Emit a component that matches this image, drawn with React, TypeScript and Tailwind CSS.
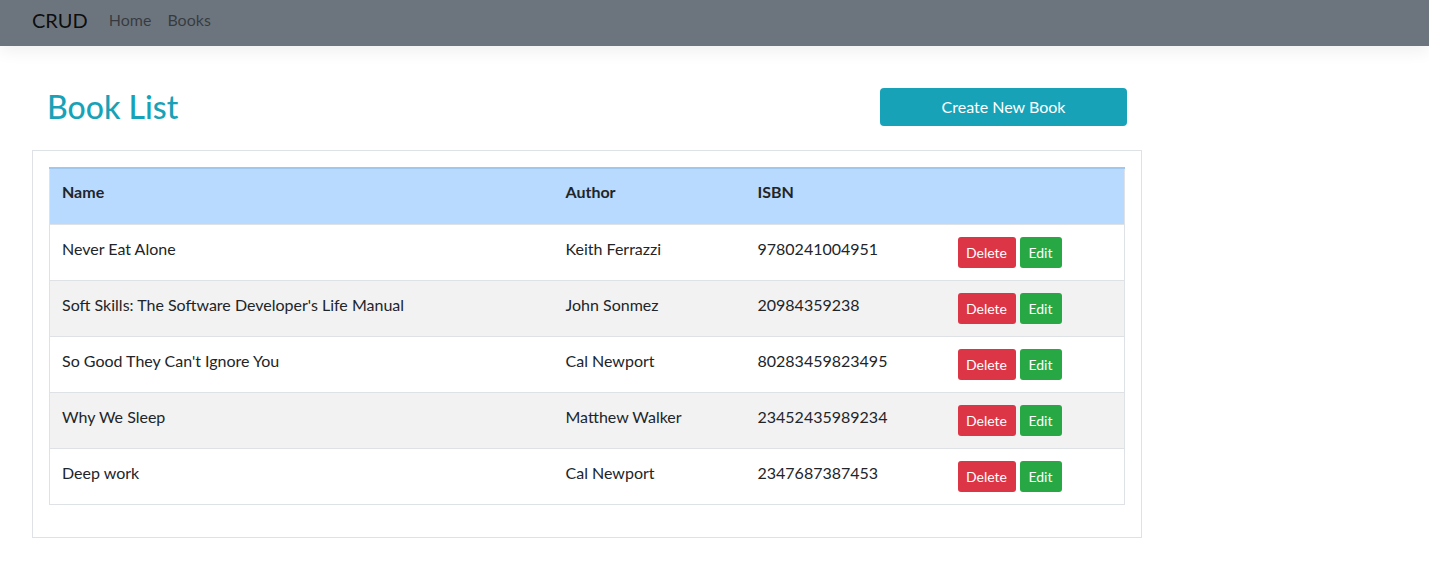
const books = [
  { name: "Never Eat Alone", author: "Keith Ferrazzi", isbn: "9780241004951" },
  { name: "Soft Skills: The Software Developer's Life Manual", author: "John Sonmez", isbn: "20984359238" },
  { name: "So Good They Can't Ignore You", author: "Cal Newport", isbn: "80283459823495" },
  { name: "Why We Sleep", author: "Matthew Walker", isbn: "23452435989234" },
  { name: "Deep work", author: "Cal Newport", isbn: "2347687387453" },
];

const App = () => {
  return (
    <div className="min-h-[580px] bg-white text-[#212529]" style={{ fontFamily: "Lato, 'Noto Sans', sans-serif" }}>
      <nav className="flex h-[46px] items-center bg-[#6c757d] pb-[6px] pl-[32px] shadow-[0_6px_16px_rgba(0,0,0,0.06)]">
        <span className="mr-[21px] text-[20px] leading-[30px] text-black/90">CRUD</span>
        <a className="mr-[16px] text-[16px] text-black/50">Home</a>
        <a className="text-[16px] text-black/50">Books</a>
      </nav>

      <div className="w-[1110px] ml-[32px] pt-[41px]">
        <div className="flex items-center justify-between pl-[15px] pr-[15px]">
          <h1 className="text-[32px] font-medium leading-[40px] text-[#17a2b8]">Book List</h1>
          <button className="h-[38px] w-[247px] rounded-[4px] bg-[#17a2b8] text-[16px] text-white">
            Create New Book
          </button>
        </div>

        <div className="mt-[23px] border border-[#dee2e6] p-[16px] pb-[32px]">
          <table className="w-full border-collapse border border-[#dee2e6] text-[16px]">
            <thead>
              <tr className="bg-[#b8daff] border-t-2 border-t-[#9fc7f0]">
                <th className="h-[56px] w-[504px] px-[12px] pt-[11px] align-top text-left font-bold leading-[24px]">Name</th>
                <th className="w-[192px] px-[12px] pt-[11px] align-top text-left font-bold leading-[24px]">Author</th>
                <th className="w-[200px] px-[12px] pt-[11px] align-top text-left font-bold leading-[24px]">ISBN</th>
                <th className="px-[12px]"></th>
              </tr>
            </thead>
            <tbody>
              {books.map((b, i) => (
                <tr key={b.isbn} className={`border-t border-[#dee2e6] ${i % 2 === 1 ? "bg-[#f2f2f2]" : "bg-white"}`}>
                  <td className="h-[55px] px-[12px] pt-[12px] align-top leading-[24px]">{b.name}</td>
                  <td className="px-[12px] pt-[12px] align-top leading-[24px]">{b.author}</td>
                  <td className="px-[12px] pt-[12px] align-top leading-[24px]">{b.isbn}</td>
                  <td className="px-[12px] py-[12px] align-top">
                    <div className="flex gap-[4px]">
                      <button className="h-[31px] w-[58px] rounded-[3px] bg-[#dc3545] text-[14px] text-white">Delete</button>
                      <button className="h-[31px] w-[42px] rounded-[3px] bg-[#28a745] text-[14px] text-white">Edit</button>
                    </div>
                  </td>
                </tr>
              ))}
            </tbody>
          </table>
        </div>
      </div>
    </div>
  );
};

export default App;
